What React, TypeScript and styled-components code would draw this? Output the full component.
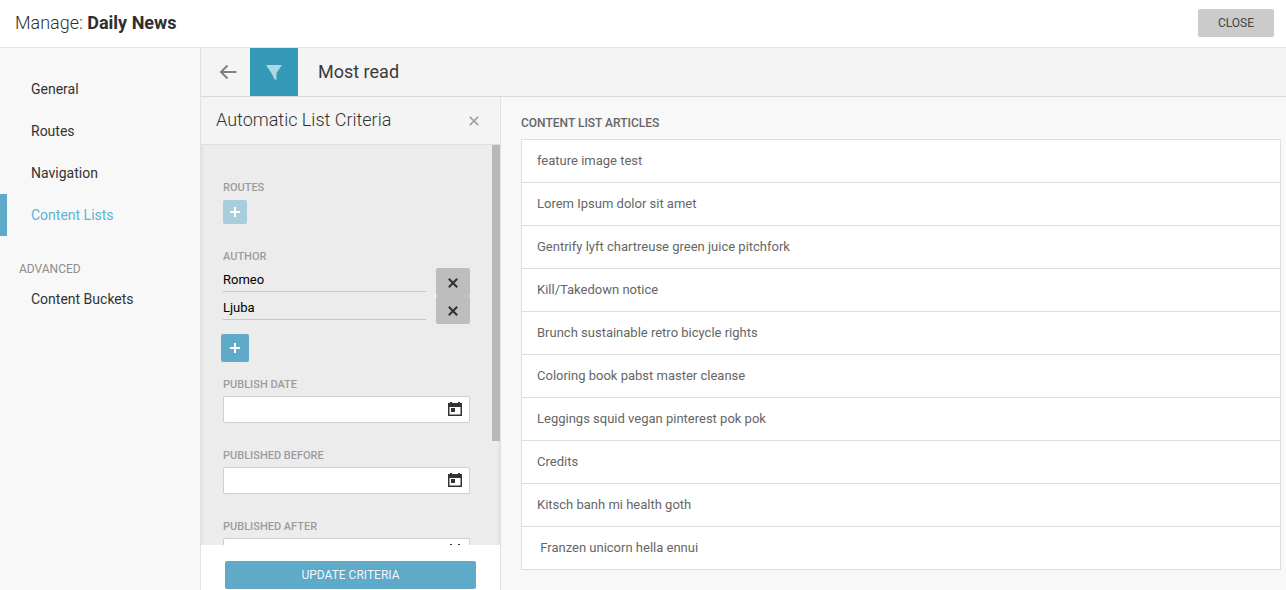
import React from "react";
import styled, { createGlobalStyle } from "styled-components";

const GlobalStyle = createGlobalStyle`
  html, body {
    margin: 0;
    padding: 0;
    height: 100%;
    overflow: hidden;
    background: #f8f8f8;
    font-family: Roboto, "Liberation Sans", sans-serif;
  }
  * { box-sizing: border-box; }
`;

const Page = styled.div`
  width: 1286px;
  height: 590px;
  display: flex;
  flex-direction: column;
  overflow: hidden;
`;

const TopBar = styled.header`
  height: 48px;
  flex: none;
  display: flex;
  align-items: center;
  justify-content: space-between;
  padding: 0 12px 1px 15px;
  background: #fff;
  border-bottom: 1px solid #e4e4e4;
`;

const Title = styled.h1`
  margin: 0 0 2px;
  font-size: 18px;
  font-weight: 300;
  color: #2f2f2f;
  b { font-weight: 700; }
`;

const CloseButton = styled.button`
  width: 76px;
  height: 28px;
  border: 0;
  border-radius: 2px;
  background: #cbcbcb;
  color: #444;
  font: 400 12px Roboto, sans-serif;
  padding: 0;
`;

const Body = styled.div`
  flex: 1;
  display: flex;
  min-height: 0;
`;

const Sidebar = styled.nav`
  width: 201px;
  flex: none;
  padding-top: 20px;
  background: #f8f8f8;
  border-right: 1px solid #e2e2e2;
`;

const NavItem = styled.div<{ $active?: boolean }>`
  height: 42px;
  display: flex;
  align-items: center;
  padding-left: ${(p) => (p.$active ? "24px" : "31px")};
  font-size: 14px;
  color: ${(p) => (p.$active ? "#5bb4d6" : "#333")};
  border-left: ${(p) => (p.$active ? "7px solid #5fa9c9" : "0")};
`;

const NavHeading = styled.div`
  margin-top: 26px;
  padding-left: 19px;
  height: 16px;
  line-height: 14px;
  font-size: 12px;
  color: #8d8d8d;
`;

const Main = styled.div`
  flex: 1;
  min-width: 0;
  display: flex;
  flex-direction: column;
`;

const ListBar = styled.div`
  height: 49px;
  flex: none;
  display: flex;
  align-items: center;
  background: #f4f4f4;
  border-bottom: 1px solid #d9d9d9;
`;

const BackButton = styled.div`
  width: 49px;
  height: 48px;
  padding-left: 5px;
  display: flex;
  align-items: center;
  justify-content: center;
`;

const FilterTab = styled.div`
  width: 48px;
  height: 48px;
  display: flex;
  align-items: center;
  justify-content: center;
  background: #3498b7;
`;

const ListName = styled.div`
  margin: 0 0 2px 20px;
  font-size: 18px;
  color: #3a3a3a;
`;

const Columns = styled.div`
  flex: 1;
  display: flex;
  min-height: 0;
`;

const Criteria = styled.aside`
  width: 300px;
  flex: none;
  display: flex;
  flex-direction: column;
  border-right: 1px solid #e2e2e2;
`;

const CriteriaHead = styled.div`
  height: 48px;
  flex: none;
  display: flex;
  align-items: center;
  justify-content: space-between;
  padding: 0 21px 1px 15px;
  background: #f4f4f4;
  border-bottom: 1px solid #dfdfdf;
`;

const CriteriaTitle = styled.div`
  margin-bottom: 2px;
  font-size: 18px;
  font-weight: 300;
  color: #333;
`;

const HeadClose = styled.span`
  display: flex;
  margin-top: 2px;
`;

const Scroller = styled.div`
  position: relative;
  flex: 1;
  min-height: 0;
  overflow: hidden;
  padding: 37px 30px 0 22px;
  background: #ececec;
  box-shadow: inset 4px 0 4px -4px rgba(0, 0, 0, 0.1), inset -4px 0 4px -4px rgba(0, 0, 0, 0.1);
`;

const ScrollThumb = styled.div`
  position: absolute;
  top: 0;
  right: 0;
  width: 8px;
  height: 296px;
  background: #b8b8b8;
`;

const FieldLabel = styled.div`
  height: 12px;
  line-height: 12px;
  font-size: 11px;
  font-weight: 500;
  color: #9c9c9c;
`;

const AddButton = styled.div<{ $muted?: boolean; $offset?: boolean }>`
  width: ${(p) => (p.$muted ? "24px" : "28px")};
  height: ${(p) => (p.$muted ? "24px" : "28px")};
  margin-top: ${(p) => (p.$muted ? "6px" : "10px")};
  margin-left: ${(p) => (p.$offset ? "-2px" : "0")};
  display: flex;
  align-items: center;
  justify-content: center;
  border-radius: 2px;
  background: ${(p) => (p.$muted ? "#a8cddd" : "#5fa9c9")};
`;

const AuthorSection = styled.div`
  margin-top: 27px;
`;

const AuthorRows = styled.div`
  margin-top: 5px;
`;

const AuthorRow = styled.div`
  display: flex;
  height: 28px;
  justify-content: space-between;
`;

const AuthorName = styled.div`
  width: 203px;
  height: 24px;
  line-height: 24px;
  font-size: 13px;
  color: #000;
  border-bottom: 1px solid #c6c6c6;
`;

const RemoveButton = styled.div`
  width: 34px;
  height: 28px;
  padding-top: 2px;
  display: flex;
  align-items: center;
  justify-content: center;
  background: #bdbdbd;
  border-radius: 2px;
`;

const DateSection = styled.div<{ $gap: number }>`
  margin-top: ${(p) => p.$gap}px;
`;

const DateInput = styled.div`
  width: 247px;
  height: 27px;
  margin-top: 5px;
  display: flex;
  align-items: flex-start;
  justify-content: flex-end;
  padding: 5px 7px 0 0;
  background: #fff;
  border: 1px solid #cfcfcf;
  border-radius: 2px;
`;

const CriteriaFoot = styled.div`
  position: relative;
  height: 45px;
  flex: none;
  padding: 16px 24px 0;
  background: #fff;
`;

const UpdateButton = styled.button`
  display: block;
  width: 251px;
  height: 28px;
  padding: 0;
  border: 0;
  border-radius: 2px;
  background: #5fa9c9;
  color: #f0f7fa;
  font: 400 12px Roboto, sans-serif;
`;

const Articles = styled.section`
  flex: 1;
  min-width: 0;
  padding: 20px 5px 0 20px;
  background: #f8f8f8;
`;

const ArticlesLabel = styled.div`
  height: 13px;
  line-height: 13px;
  font-size: 12px;
  font-weight: 500;
  color: #666;
`;

const ArticleList = styled.ul`
  list-style: none;
  margin: 9px 0 0;
  padding: 0;
  background: #fff;
  border: 1px solid #dedede;
  border-bottom: 0;
`;

const ArticleRow = styled.li`
  height: 43px;
  display: flex;
  align-items: center;
  padding: 0 15px 1px;
  font-size: 13px;
  color: #666;
  white-space: pre;
  border-bottom: 1px solid #dedede;
`;

const PlusIcon = ({ size }: { size: number }) => (
  <svg width={size} height={size} viewBox="0 0 12 12">
    <path d="M6 1v10M1 6h10" stroke="#fff" strokeWidth="2" fill="none" />
  </svg>
);

const CrossIcon = ({ size, color, weight }: { size: number; color: string; weight: number }) => (
  <svg width={size} height={size} viewBox="0 0 12 12">
    <path d="M1 1l10 10M11 1L1 11" stroke={color} strokeWidth={weight} fill="none" />
  </svg>
);

const CalendarIcon = () => (
  <svg width="14" height="14" viewBox="0 0 14 14">
    <path
      fillRule="evenodd"
      fill="#333"
      d="M0 1h2V0h2v1h6V0h2v1h2v13H0V1zm1.500 4v7.500h11V5h-11z"
    />
    <rect x="3" y="6" width="4" height="4" fill="#333" />
  </svg>
);

const articles = [
  "feature image test",
  "Lorem Ipsum dolor sit amet",
  "Gentrify lyft chartreuse green juice pitchfork",
  "Kill/Takedown notice",
  "Brunch sustainable retro bicycle rights",
  "Coloring book pabst master cleanse",
  "Leggings squid vegan pinterest pok pok",
  "Credits",
  "Kitsch banh mi health goth",
  " Franzen unicorn hella ennui",
];

const App: React.FC = () => (
  <Page>
    <GlobalStyle />
    <TopBar>
      <Title>
        Manage: <b>Daily News</b>
      </Title>
      <CloseButton>CLOSE</CloseButton>
    </TopBar>
    <Body>
      <Sidebar>
        <NavItem>General</NavItem>
        <NavItem>Routes</NavItem>
        <NavItem>Navigation</NavItem>
        <NavItem $active>Content Lists</NavItem>
        <NavHeading>ADVANCED</NavHeading>
        <NavItem>Content Buckets</NavItem>
      </Sidebar>
      <Main>
        <ListBar>
          <BackButton>
            <svg width="18" height="16" viewBox="0 0 18 16">
              <path d="M17.500 8H2M8.500 1.500L2 8l6.500 6.500" stroke="#808080" strokeWidth="2" fill="none" />
            </svg>
          </BackButton>
          <FilterTab>
            <svg width="16" height="16" viewBox="0 0 16 16">
              <path d="M0 1h16l-5.500 8v6.500H8.500L6 10z" fill="#acd7e5" />
            </svg>
          </FilterTab>
          <ListName>Most read</ListName>
        </ListBar>
        <Columns>
          <Criteria>
            <CriteriaHead>
              <CriteriaTitle>Automatic List Criteria</CriteriaTitle>
              <HeadClose>
                <CrossIcon size={10} color="#a3a3a3" weight={2} />
              </HeadClose>
            </CriteriaHead>
            <Scroller>
              <FieldLabel>ROUTES</FieldLabel>
              <AddButton $muted>
                <PlusIcon size={12} />
              </AddButton>
              <AuthorSection>
                <FieldLabel>AUTHOR</FieldLabel>
                <AuthorRows>
                  <AuthorRow>
                    <AuthorName>Romeo</AuthorName>
                    <RemoveButton>
                      <CrossIcon size={10} color="#333" weight={2.5} />
                    </RemoveButton>
                  </AuthorRow>
                  <AuthorRow>
                    <AuthorName>Ljuba</AuthorName>
                    <RemoveButton>
                      <CrossIcon size={10} color="#333" weight={2.5} />
                    </RemoveButton>
                  </AuthorRow>
                </AuthorRows>
                <AddButton $offset>
                  <PlusIcon size={12} />
                </AddButton>
              </AuthorSection>
              <DateSection $gap={17}>
                <FieldLabel>PUBLISH DATE</FieldLabel>
                <DateInput>
                  <CalendarIcon />
                </DateInput>
              </DateSection>
              <DateSection $gap={27}>
                <FieldLabel>PUBLISHED BEFORE</FieldLabel>
                <DateInput>
                  <CalendarIcon />
                </DateInput>
              </DateSection>
              <DateSection $gap={27}>
                <FieldLabel>PUBLISHED AFTER</FieldLabel>
                <DateInput>
                  <CalendarIcon />
                </DateInput>
              </DateSection>
              <ScrollThumb />
            </Scroller>
            <CriteriaFoot>
              <UpdateButton>UPDATE CRITERIA</UpdateButton>
            </CriteriaFoot>
          </Criteria>
          <Articles>
            <ArticlesLabel>CONTENT LIST ARTICLES</ArticlesLabel>
            <ArticleList>
              {articles.map((title) => (
                <ArticleRow key={title}>{title}</ArticleRow>
              ))}
            </ArticleList>
          </Articles>
        </Columns>
      </Main>
    </Body>
  </Page>
);

export default App;
